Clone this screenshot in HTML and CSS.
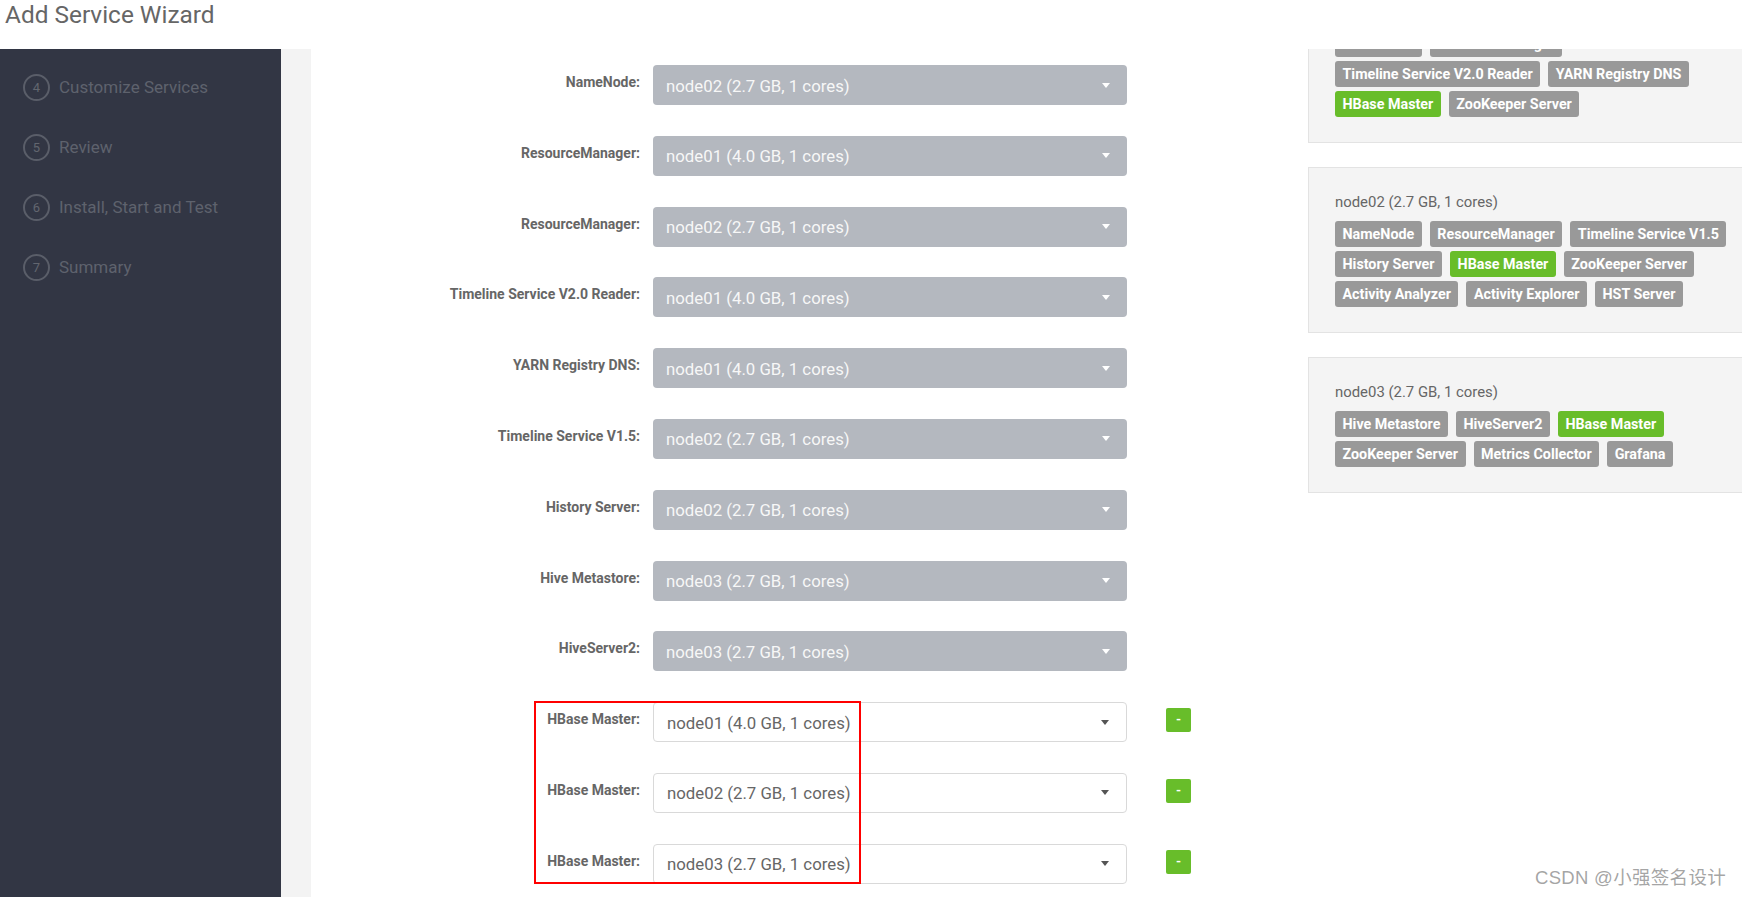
FILE: index.html
```html
<!DOCTYPE html>
<html lang="en">
<head>
<meta charset="utf-8">
<title>Add Service Wizard</title>
<link rel="stylesheet" href="styles.css">
</head>
<body>
<header class="topbar">
  <h1 class="wizard-title">Add Service Wizard</h1>
</header>

<div class="workspace">
  <nav class="steps">
    <ol class="step-list">
      <li class="step"><span class="step-num">4</span><span class="step-name">Customize Services</span></li>
      <li class="step"><span class="step-num">5</span><span class="step-name">Review</span></li>
      <li class="step"><span class="step-num">6</span><span class="step-name">Install, Start and Test</span></li>
      <li class="step"><span class="step-num">7</span><span class="step-name">Summary</span></li>
    </ol>
  </nav>
  <div class="gutter"></div>

  <main class="content">
    <form class="assign-form">
      <div class="assign-row">
        <label class="assign-label">NameNode:</label>
        <div class="picker picker-locked"><span class="picker-text">node02 (2.7 GB, 1 cores)</span><span class="caret"></span></div>
      </div>
      <div class="assign-row">
        <label class="assign-label">ResourceManager:</label>
        <div class="picker picker-locked"><span class="picker-text">node01 (4.0 GB, 1 cores)</span><span class="caret"></span></div>
      </div>
      <div class="assign-row">
        <label class="assign-label">ResourceManager:</label>
        <div class="picker picker-locked"><span class="picker-text">node02 (2.7 GB, 1 cores)</span><span class="caret"></span></div>
      </div>
      <div class="assign-row">
        <label class="assign-label">Timeline Service V2.0 Reader:</label>
        <div class="picker picker-locked"><span class="picker-text">node01 (4.0 GB, 1 cores)</span><span class="caret"></span></div>
      </div>
      <div class="assign-row">
        <label class="assign-label">YARN Registry DNS:</label>
        <div class="picker picker-locked"><span class="picker-text">node01 (4.0 GB, 1 cores)</span><span class="caret"></span></div>
      </div>
      <div class="assign-row">
        <label class="assign-label">Timeline Service V1.5:</label>
        <div class="picker picker-locked"><span class="picker-text">node02 (2.7 GB, 1 cores)</span><span class="caret"></span></div>
      </div>
      <div class="assign-row">
        <label class="assign-label">History Server:</label>
        <div class="picker picker-locked"><span class="picker-text">node02 (2.7 GB, 1 cores)</span><span class="caret"></span></div>
      </div>
      <div class="assign-row">
        <label class="assign-label">Hive Metastore:</label>
        <div class="picker picker-locked"><span class="picker-text">node03 (2.7 GB, 1 cores)</span><span class="caret"></span></div>
      </div>
      <div class="assign-row">
        <label class="assign-label">HiveServer2:</label>
        <div class="picker picker-locked"><span class="picker-text">node03 (2.7 GB, 1 cores)</span><span class="caret"></span></div>
      </div>
      <div class="assign-row">
        <label class="assign-label">HBase Master:</label>
        <div class="picker picker-open"><span class="picker-text">node01 (4.0 GB, 1 cores)</span><span class="caret"></span></div>
        <button type="button" class="btn-remove">-</button>
      </div>
      <div class="assign-row">
        <label class="assign-label">HBase Master:</label>
        <div class="picker picker-open"><span class="picker-text">node02 (2.7 GB, 1 cores)</span><span class="caret"></span></div>
        <button type="button" class="btn-remove">-</button>
      </div>
      <div class="assign-row">
        <label class="assign-label">HBase Master:</label>
        <div class="picker picker-open"><span class="picker-text">node03 (2.7 GB, 1 cores)</span><span class="caret"></span></div>
        <button type="button" class="btn-remove">-</button>
      </div>
    </form>

    <aside class="host-panels">
      <section class="host-card">
        <div class="host-name">node01 (4.0 GB, 1 cores)</div>
        <div class="tag-list">
          <span class="tag">NameNode</span>
          <span class="tag">ResourceManager</span>
          <span class="tag">Timeline Service V2.0 Reader</span>
          <span class="tag">YARN Registry DNS</span>
          <span class="tag tag-new">HBase Master</span>
          <span class="tag">ZooKeeper Server</span>
        </div>
      </section>
      <section class="host-card">
        <div class="host-name">node02 (2.7 GB, 1 cores)</div>
        <div class="tag-list">
          <span class="tag">NameNode</span>
          <span class="tag">ResourceManager</span>
          <span class="tag">Timeline Service V1.5</span>
          <span class="tag">History Server</span>
          <span class="tag tag-new">HBase Master</span>
          <span class="tag">ZooKeeper Server</span>
          <span class="tag">Activity Analyzer</span>
          <span class="tag">Activity Explorer</span>
          <span class="tag">HST Server</span>
        </div>
      </section>
      <section class="host-card">
        <div class="host-name">node03 (2.7 GB, 1 cores)</div>
        <div class="tag-list">
          <span class="tag">Hive Metastore</span>
          <span class="tag">HiveServer2</span>
          <span class="tag tag-new">HBase Master</span>
          <span class="tag">ZooKeeper Server</span>
          <span class="tag">Metrics Collector</span>
          <span class="tag">Grafana</span>
        </div>
      </section>
    </aside>
  </main>
</div>

<div class="highlight-box"></div>
<div class="watermark">CSDN @小强签名设计</div>
</body>
</html>
```

FILE: styles.css
```css
* {
  box-sizing: border-box;
}

html, body {
  margin: 0;
  padding: 0;
  height: 100%;
  overflow: hidden;
  background: #ffffff;
  font-family: Roboto, "Noto Sans", "Liberation Sans", sans-serif;
}

/* ---------- header ---------- */
.topbar {
  height: 49px;
  padding-left: 5px;
  background: #ffffff;
}

.wizard-title {
  margin: 0;
  font-size: 24.4px;
  font-weight: 400;
  line-height: 30px;
  color: #666666;
}

/* ---------- body area ---------- */
.workspace {
  display: flex;
  height: calc(100vh - 49px);
  overflow: hidden;
}

.steps {
  flex: none;
  width: 281px;
  background: #323644;
  padding-top: 8px;
}

.step-list {
  list-style: none;
  margin: 0;
  padding: 0 0 0 23px;
}

.step {
  display: flex;
  align-items: center;
  height: 60px;
}

.step-num {
  flex: none;
  width: 27px;
  height: 27px;
  border: 2px solid #5a5e69;
  border-radius: 50%;
  display: flex;
  align-items: center;
  justify-content: center;
  font-size: 13px;
  color: #62666f;
}

.step-name {
  margin-left: 9px;
  font-size: 17px;
  color: #5e626d;
}

.gutter {
  flex: none;
  width: 30px;
  background: #f3f3f3;
}

.content {
  flex: 1;
  display: flex;
  align-items: flex-start;
  min-width: 0;
}

/* ---------- assignment form ---------- */
.assign-form {
  flex: none;
  width: 997px;
  margin: 0;
  padding-top: 16px;
}

.assign-row {
  display: flex;
  align-items: flex-start;
  height: 40px;
  margin-bottom: 30.8px;
}

.assign-label {
  flex: none;
  width: 329px;
  padding-top: 7px;
  text-align: right;
  font-size: 14px;
  font-weight: 700;
  line-height: 20px;
  color: #666666;
}

.picker {
  flex: none;
  display: flex;
  align-items: center;
  justify-content: space-between;
  width: 474px;
  height: 40px;
  margin-left: 13px;
  padding: 0 13px 0 13px;
  border-radius: 4px;
  font-size: 16.8px;
}

.picker-locked {
  background: #b4b8bf;
  color: #f7f7f7;
}

.picker-open {
  background: #ffffff;
  border: 1px solid #d9d9d9;
  color: #666666;
}

.picker-text {
  line-height: 20px;
  padding-top: 1px;
}

.caret {
  width: 0;
  height: 0;
  border-left: 4px solid transparent;
  border-right: 4px solid transparent;
  border-top: 5px solid #ffffff;
  margin-right: 4px;
}

.picker-open .caret {
  border-top-color: #555555;
}

.btn-remove {
  flex: none;
  width: 25px;
  height: 24px;
  margin: 6px 0 0 39px;
  padding: 0;
  border: none;
  border-radius: 2px;
  background: #68bd2a;
  color: #ffffff;
  font-family: Roboto, sans-serif;
  font-size: 13px;
  font-weight: 700;
  line-height: 24px;
}

/* ---------- host panels ---------- */
.host-panels {
  flex: none;
  width: 489px;
  margin-top: -72px;
}

.host-card {
  background: #f4f4f4;
  border: 1px solid #e3e3e3;
  padding: 24px 26px 25px 26px;
  margin-bottom: 24px;
}

.host-name {
  font-size: 14.9px;
  line-height: 20px;
  color: #666666;
  margin-bottom: 9px;
}

.tag-list {
  display: flex;
  flex-wrap: wrap;
  column-gap: 8px;
  row-gap: 4px;
}

.tag {
  display: inline-block;
  height: 26px;
  padding: 0 7.5px;
  border-radius: 3px;
  background: #999999;
  color: #ffffff;
  font-size: 14.3px;
  font-weight: 700;
  line-height: 26px;
  white-space: nowrap;
}

.tag-new {
  background: #68bd2a;
}

/* ---------- overlays ---------- */
.highlight-box {
  position: absolute;
  left: 534px;
  top: 701px;
  width: 327px;
  height: 183px;
  border: 2px solid #ff0000;
  pointer-events: none;
}

.watermark {
  position: absolute;
  right: 16px;
  bottom: 8px;
  font-family: "Liberation Sans", "Noto Sans CJK SC", sans-serif;
  font-size: 18.5px;
  color: rgba(125, 125, 125, 0.7);
  letter-spacing: 0.3px;
}
```
